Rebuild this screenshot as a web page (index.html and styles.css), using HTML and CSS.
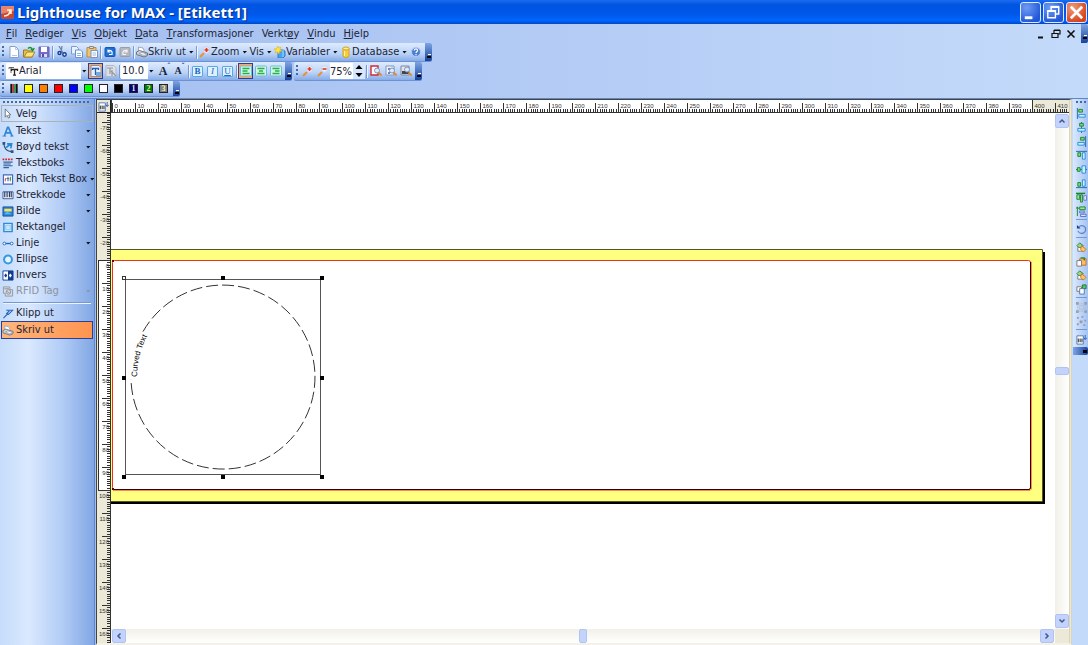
FILE: index.html
```
<!DOCTYPE html>
<html lang="no">
<head>
<meta charset="utf-8">
<title>Lighthouse for MAX - [Etikett1]</title>
<link rel="stylesheet" href="styles.css">
</head>
<body>
<svg class="defs" aria-hidden="true">
  <symbol id="new" viewBox="0 0 12 12"><path d="M2 .5h5.500l3 3v8H2z" fill="#fff" stroke="#8a9fc4"/><path d="M7.500.5v3h3M4 9.500h5" stroke="#a9cdf2" fill="none"/></symbol>
  <symbol id="open" viewBox="0 0 12 12"><path d="M.5 11V4h4l1 1h4v6z" fill="#e8c048" stroke="#9a7b20"/><path d="M1 11l3-5h8l-3 5z" fill="#ffe27a" stroke="#a88828"/><path d="M5 2.500c2-2 4-1 4.500 1.500M7.800 3l2 1.500L11.300 2" fill="none" stroke="#18952c" stroke-width="1.400"/></symbol>
  <symbol id="save" viewBox="0 0 12 12"><path d="M1 1h10v10H1z" fill="#746cc8" stroke="#6a63bc"/><path d="M3 1h6v5H3z" fill="#fff"/><path d="M3 8h6v3H3z" fill="#d8dcf4"/><path d="M4 8h2v3H4z" fill="#514aa6"/></symbol>
  <symbol id="cut" viewBox="0 0 12 12"><path d="M3 0l4 7M6 0L5 7" stroke="#6880a8" stroke-width="1.200"/><circle cx="3.500" cy="7" r="1.500" fill="#d8e8ff" stroke="#173f90" stroke-width="1.400"/><circle cx="8.500" cy="8.500" r="1.700" fill="#d8e8ff" stroke="#173f90" stroke-width="1.400"/></symbol>
  <symbol id="copy" viewBox="0 0 12 12"><path d="M.5.5h5l2 2V8h-7z" fill="#e9f2ff" stroke="#7c9ccf"/><path d="M4.500 4h5l2 2v5.500h-7z" fill="#fff" stroke="#6c90c8"/><path d="M6 7.500h4M6 9.500h4" stroke="#8ab4ee"/></symbol>
  <symbol id="paste" viewBox="0 0 12 12"><path d="M1 1.500h9V11H1z" fill="#f0c468" stroke="#b98e40"/><path d="M3.500.5h4v2h-4z" fill="#ddd" stroke="#888"/><path d="M5 4.500h6.500v7H5z" fill="#fff" stroke="#7c94c0"/><path d="M6.500 7h3.500M6.500 9h3.500" stroke="#9bb8e0"/></symbol>
  <symbol id="undo" viewBox="0 0 12 12"><rect x="1" y="1.500" width="10" height="9" rx="1" fill="#1d6fd4" stroke="#1458b8"/><path d="M4 3.500v2.500h2.500M4 5.500C6 3 9 5 8 8.500H5" fill="none" stroke="#fff" stroke-width="1.200"/></symbol>
  <symbol id="redo" viewBox="0 0 12 12"><rect x="1" y="1.500" width="10" height="9" rx="1" fill="#b4b8c0" stroke="#989da6"/><path d="M8 3.500v2.500H5.500M8 5.500C6 3 3 5 4 8.500H7" fill="none" stroke="#f4f4f4" stroke-width="1.200"/></symbol>
  <symbol id="print" viewBox="0 0 12 12"><path d="M2.500 5V1l4.500 1 1.500 3.500" fill="#fff" stroke="#a0abc0"/><path d="M.5 6l3-1.500 8 2.500v2.500L8 11 .5 8.500z" fill="#cfd2da" stroke="#6d7482"/><path d="M3 7.500l5 2 3-1.500-5-1.500z" fill="#fff" stroke="#8a909c" stroke-width=".7"/></symbol>
  <symbol id="zin" viewBox="0 0 12 12"><path d="M1 11l4-4" stroke="#ec9038" stroke-width="2.200"/><circle cx="7.500" cy="4" r="3.300" fill="#e6efff" stroke="#c4d2ee"/><path d="M5.500 4h4M7.500 2v4" stroke="#e0381c" stroke-width="1.600"/></symbol>
  <symbol id="zout" viewBox="0 0 12 12"><path d="M1 11l4-4" stroke="#ec9038" stroke-width="2.200"/><circle cx="7.500" cy="4" r="3.300" fill="#e6efff" stroke="#c4d2ee"/><path d="M5.500 4h4" stroke="#e0381c" stroke-width="1.600"/></symbol>
  <symbol id="var" viewBox="0 0 12 12"><path d="M4 4h5l2 1v5l-2 2H4z" fill="#49a2ee" stroke="#2c7cd0"/><path d="M9 4v7" stroke="#a5dcff"/><path d="M4 0l1 2 2-1-1 2.500L8 5 5.500 5.300 5 8 3.500 6 1 7l1-2.500L0 3l2.700-.5z" fill="#ffe23c" stroke="#e4b024" stroke-width=".6"/></symbol>
  <symbol id="db" viewBox="0 0 12 12"><path d="M3 2v8c1 2 5 2 6 0V2z" fill="#f8cd38" stroke="#d4a420"/><ellipse cx="6" cy="2.500" rx="3" ry="1.500" fill="#ffee91" stroke="#d4a420"/><path d="M4.500 5v5" stroke="#fff5b8"/></symbol>
  <symbol id="help" viewBox="0 0 12 12"><circle cx="6" cy="6" r="4.500" fill="#4c7fd4" stroke="#b4ccf4"/><path d="M4.300 4.500c0-2.400 3.800-2 3.200.2C7.200 5.800 6 5.700 6 7M6 8v1.300" fill="none" stroke="#fff" stroke-width="1.200"/></symbol>
  <symbol id="tt" viewBox="0 0 12 12"><path d="M2 4V2.500h5M4 2.500V8" fill="none" stroke="#666"/><path d="M4.500 6V4.500h6V6M7.500 4.500V10M6 10.200h3" fill="none" stroke="#222" stroke-width="1.300"/></symbol>
  <symbol id="ttb" viewBox="0 0 12 12"><path d="M1 .5h8l2 2v9H1z" fill="#e8f1ff" stroke="#7a92c0"/><path d="M2.500 5V3.500h6V5M5.500 4v6" fill="none" stroke="#2860b0" stroke-width="1.300"/><path d="M6 7h5v4H6z" fill="#74aade"/></symbol>
  <symbol id="ttg" viewBox="0 0 12 12"><path d="M1 .5h8l2 2v9H1z" fill="#dcdfe6" stroke="#b4b8c0"/><path d="M2 3h6M5 3v6M6 6l5 5M7 5v6" fill="none" stroke="#9699a2" stroke-width="1.200"/></symbol>
  <symbol id="al" viewBox="0 0 12 12"><rect x=".5" y="1" width="11" height="10" rx="1" fill="#d0f4e4" stroke="#68c0dc"/><path d="M2.500 3.500h7M2.500 6h5M2.500 8.500h7" stroke="#28b048" stroke-width="1.700"/></symbol>
  <symbol id="ac" viewBox="0 0 12 12"><rect x=".5" y="1" width="11" height="10" rx="1" fill="#d0f4e4" stroke="#68c0dc"/><path d="M2.500 3.500h7M4 6h4M2.500 8.500h7" stroke="#28b048" stroke-width="1.700"/></symbol>
  <symbol id="ar" viewBox="0 0 12 12"><rect x=".5" y="1" width="11" height="10" rx="1" fill="#d0f4e4" stroke="#68c0dc"/><path d="M2.500 3.500h7M5 6h4.500M2.500 8.500h7" stroke="#28b048" stroke-width="1.700"/></symbol>
  <symbol id="pgr" viewBox="0 0 12 12"><path d="M1 1h7v9H1z" fill="#fff" stroke="#d02838" stroke-width="1.400"/><circle cx="7" cy="5.500" r="2.500" fill="#dceaff" stroke="#8094b8"/><path d="M8.500 7.500l3 3" stroke="#e08a30" stroke-width="2"/></symbol>
  <symbol id="pgb" viewBox="0 0 12 12"><path d="M1 1h8v9H1z" fill="#eef3ff" stroke="#7c96c0"/><path d="M3 3h2v2H3zM3 7h2v2H3z" fill="#6a84b4"/><circle cx="7" cy="5.500" r="2.500" fill="#dceaff" stroke="#8094b8"/><path d="M8.500 7.500l3 3" stroke="#e08a30" stroke-width="2"/></symbol>
  <symbol id="pgk" viewBox="0 0 12 12"><path d="M1 1h8v9H1z" fill="#dfe4ef" stroke="#7c88a0"/><path d="M2 6h7v3H2z" fill="#444"/><circle cx="7" cy="4.500" r="2.500" fill="#dceaff" stroke="#8094b8"/><path d="M8.500 7.500l3 3" stroke="#e08a30" stroke-width="2"/></symbol>
  <symbol id="pens" viewBox="0 0 12 12"><path d="M3 1v10" stroke="#111" stroke-width="2"/><path d="M5 1v10" stroke="#c01818" stroke-width="1.600"/><path d="M7 1v10" stroke="#168c28" stroke-width="1.600"/><path d="M9 1v10" stroke="#111" stroke-width="2"/></symbol>
  <symbol id="ptr" viewBox="0 0 12 12"><path d="M3 1v9l2-2 1.500 3 1.500-.8L6.700 7.500H9z" fill="#fff" stroke="#555" stroke-width=".8"/></symbol>
  <symbol id="txt" viewBox="0 0 12 12"><path d="M2 11L5.500 1.500h1L10.500 11M3 7.500h6" fill="none" stroke="#2f86d8" stroke-width="1.800"/><path d="M0 11h4M8.500 11H12" stroke="#2f86d8"/></symbol>
  <symbol id="crv" viewBox="0 0 12 12"><path d="M1.500 1c0 5 3 9 9 9.500" fill="none" stroke="#34527c" stroke-width="1.200"/><path d="M0 0h3v3H0zM9 9h3v3H9z" fill="#34527c"/><path d="M4 6l5-4M5 2l5 0-1 5" fill="none" stroke="#268ad8" stroke-width="1.800"/></symbol>
  <symbol id="tbx" viewBox="0 0 12 12"><path d="M0 1.500h12" stroke="#d62a32" stroke-width="2" stroke-dasharray="2 1"/><path d="M1 4.500h10M1 6.500h8M1 8.500h10M1 10.500h6" stroke="#36619c" stroke-width="1.200"/></symbol>
  <symbol id="rtf" viewBox="0 0 12 12"><path d="M1 1h10v10H1z" fill="#fff" stroke="#4266bc" stroke-width="1.200"/><path d="M3 8V5l1.500 0" stroke="#d32f32" fill="none"/><path d="M6 3v5M5 5h2" stroke="#2056b8"/><path d="M9.500 3.500H8.500V8M8 5.500h1.500" fill="none" stroke="#258b3c"/></symbol>
  <symbol id="bar" viewBox="0 0 12 12"><path d="M.5 2h11v7.500H.5z" fill="#f6f9ff" stroke="#3c5488"/><path d="M2.500 2v6M5 2v6M7.500 2v6M9.500 2v6" stroke="#182c5c" stroke-width="1.200"/></symbol>
  <symbol id="img" viewBox="0 0 12 12"><path d="M.5 1h11v10H.5z" fill="#2c83d8" stroke="#194f9e"/><path d="M2 3h8v3H2z" fill="#ffe252"/><path d="M2 9l3-3 5 3z" fill="#49c0f4"/></symbol>
  <symbol id="rct" viewBox="0 0 12 12"><path d="M1.500 1.500h9v9h-9z" fill="#d5f0ff" stroke="#2f8ad8" stroke-width="1.600"/><path d="M3.500 3.500h5v5h-5z" fill="#c8e6fb" stroke="#8cc4ec"/></symbol>
  <symbol id="lin" viewBox="0 0 12 12"><path d="M3 6h6" stroke="#1969bb" stroke-width="1.500"/><circle cx="2" cy="6" r="1.500" fill="#fff" stroke="#1969bb"/><circle cx="10" cy="6" r="1.500" fill="#fff" stroke="#1969bb"/></symbol>
  <symbol id="ell" viewBox="0 0 12 12"><circle cx="6" cy="6" r="4.300" fill="#e3f5ff" stroke="#3c98dc" stroke-width="2.200"/></symbol>
  <symbol id="inv" viewBox="0 0 12 12"><path d="M.5 1h11v10H.5z" fill="#fff" stroke="#133c90"/><path d="M6 1h5.500v10H6z" fill="#133c90"/><path d="M2 6h3M3.500 4v4" stroke="#133c90" stroke-width="1.400"/><path d="M7 6h3M8.500 4v4" stroke="#fff" stroke-width="1.400"/></symbol>
  <symbol id="rfid" viewBox="0 0 12 12"><path d="M1 1h7v3h3v7H3V8H1z" fill="#d7dbe3" stroke="#9096a2"/><circle cx="6.500" cy="6.500" r="2.500" fill="none" stroke="#8c929c"/><path d="M2 3h5M5 6l3 2" stroke="#8c929c"/></symbol>
  <symbol id="clip" viewBox="0 0 12 12"><path d="M1 11L6 6M4 2.500h7L6.500 7l-2-1 3-3" fill="#c4e4ff" stroke="#2568c0" stroke-width="1.200"/></symbol>
  <symbol id="mb" viewBox="0 0 12 12"><path d="M1 2h7v9H1z" fill="#fff" stroke="#5175b4"/><path d="M2.500 5v4M4.500 5v4M6.500 5v4" stroke="#111"/><path d="M10 1v5M8.500 4l1.500 2 2-2" fill="none" stroke="#2a5fb6"/></symbol>
  <symbol id="a1" viewBox="0 0 12 12"><path d="M1.500 0v12" stroke="#245fae"/><path d="M3 1.500h4v3H3z" fill="#7bdc72" stroke="#168430"/><path d="M3 7h7v3H3z" fill="#c8f0ff" stroke="#258bd6"/></symbol>
  <symbol id="a2" viewBox="0 0 12 12"><path d="M6 0v12" stroke="#245fae"/><path d="M4 1.500h4v3H4z" fill="#7bdc72" stroke="#168430"/><path d="M2 7h8v3H2z" fill="#c8f0ff" stroke="#258bd6"/></symbol>
  <symbol id="a3" viewBox="0 0 12 12"><path d="M10.500 0v12" stroke="#245fae"/><path d="M5 1.500h4v3H5z" fill="#7bdc72" stroke="#168430"/><path d="M2 7h7v3H2z" fill="#c8f0ff" stroke="#258bd6"/></symbol>
  <symbol id="a4" viewBox="0 0 12 12"><path d="M0 1.500h12" stroke="#245fae"/><path d="M2 3h3v4H2z" fill="#7bdc72" stroke="#168430"/><path d="M7 3h3v7H7z" fill="#c8f0ff" stroke="#258bd6"/></symbol>
  <symbol id="a5" viewBox="0 0 12 12"><path d="M0 6h12" stroke="#245fae"/><path d="M1.500 4h3v4h-3z" fill="#7bdc72" stroke="#168430"/><path d="M6.500 2h4v8h-4z" fill="#c8f0ff" stroke="#258bd6"/></symbol>
  <symbol id="a6" viewBox="0 0 12 12"><path d="M0 10.500h12" stroke="#245fae"/><path d="M2 5h3v4H2z" fill="#7bdc72" stroke="#168430"/><path d="M7 2h3v7H7z" fill="#c8f0ff" stroke="#258bd6"/></symbol>
  <symbol id="a7" viewBox="0 0 12 12"><path d="M0 1.500h10" stroke="#168430" stroke-width="1.500"/><path d="M1 3h3v5H1zM5 3h2v8H5z" fill="#9de493" stroke="#168430"/><path d="M8.500 4h3v5h-3z" fill="#dfe4ff" stroke="#6878c4"/></symbol>
  <symbol id="a8" viewBox="0 0 12 12"><path d="M1.500 1v10M0 3l1.500-2L3 3" fill="none" stroke="#168430"/><path d="M4 1h6v3H4z" fill="#9de493" stroke="#168430"/><path d="M4 5.500h5v2H4zM5 9h6v2.500H5z" fill="#dfe4ff" stroke="#5270c0"/></symbol>
  <symbol id="rot" viewBox="0 0 12 12"><path d="M3 3.500c3-3.500 8-1 7.500 3S4 12 2 7.500" fill="none" stroke="#5a7fc2" stroke-width="1.200"/><path d="M1 1v4h4z" fill="#183f9c"/></symbol>
  <symbol id="o1" viewBox="0 0 12 12"><path d="M4 1l4 3-4 3-3-3z" fill="#9bd77d" stroke="#2a813a"/><path d="M2 6h6v4H2z" fill="#fff" stroke="#777"/><path d="M6 4l5 4-3 3-3-3z" fill="#ffc46a" stroke="#c3761f"/></symbol>
  <symbol id="o2" viewBox="0 0 12 12"><path d="M4 3h7v7H4z" fill="#ffbb6a" stroke="#c36a1a"/><path d="M1 5h5v6H1z" fill="#fff" stroke="#777"/><path d="M5 2h4v3" fill="none" stroke="#218e35" stroke-width="1.500"/></symbol>
  <symbol id="o3" viewBox="0 0 12 12"><path d="M1 3h5v5H1z" fill="#fff" stroke="#777"/><path d="M7 1h4v4H7z" fill="#5ac46b" stroke="#187a2c"/><path d="M4 5h5v6H4z" fill="#fff" stroke="#5874a8"/></symbol>
  <symbol id="grp" viewBox="0 0 12 12"><path d="M2 2h8v8H2zM4 4h4v4H4z" fill="none" stroke="#adb7c8" stroke-dasharray="2 1"/><path d="M0 0h3v3H0zM9 0h3v3H9zM0 9h3v3H0zM9 9h3v3H9z" fill="#98a2b4"/></symbol>
  <symbol id="ugr" viewBox="0 0 12 12"><path d="M1 1h2v2H1zM6 0h2v2H6zM9 4h2v2H9zM4 5h3v3H4zM1 8h2v2H1zM8 9h2v2H8z" fill="#929cae"/></symbol>
</svg>

<header class="title">
  <svg class="logo" viewBox="0 0 13 13"><rect width="13" height="13" rx="1" fill="#c84830"/><path d="M0 0h13v5L0 8z" fill="#e88268"/><path d="M3 10c5 0 6-3 6-6M6 4h4v4" fill="none" stroke="#fff0d8" stroke-width="1.600"/></svg>
  <h1>Lighthouse for MAX - [Etikett1]</h1>
  <button class="win" aria-label="Minimer"><svg viewBox="0 0 20 20"><path d="M4 14h8v3H4z" fill="#fff"/></svg></button>
  <button class="win" aria-label="Gjenopprett"><svg viewBox="0 0 20 20"><path d="M7.500 8V4.500h8v7H12" fill="none" stroke="#fff" stroke-width="1.500"/><path d="M7 4h9" stroke="#fff" stroke-width="2"/><path d="M4 8.500h8v7H4z" fill="none" stroke="#fff" stroke-width="1.500"/><path d="M3.500 8.500h9" stroke="#fff" stroke-width="2"/></svg></button>
  <button class="win close" aria-label="Lukk"><svg viewBox="0 0 20 20"><path d="M4 4l12 12M16 4L4 16" stroke="#fff" stroke-width="2.800"/></svg></button>
</header>

<nav class="menu">
  <button><u>F</u>il</button><button><u>R</u>ediger</button><button><u>V</u>is</button><button><u>O</u>bjekt</button><button><u>D</u>ata</button><button><u>T</u>ransformasjoner</button><button>Verkt<u>ø</u>y</button><button><u>V</u>indu</button><button><u>H</u>jelp</button>
  <span class="push"></span>
  <button class="mdi" aria-label="Minimer dokument"><svg viewBox="0 0 10 10"><path d="M2 8.500h5" stroke="#111" stroke-width="2"/></svg></button>
  <button class="mdi" aria-label="Gjenopprett dokument"><svg viewBox="0 0 10 10"><path d="M3 4V1.500h6V5H7M1 4.500h6v4H1zM3 1h6M1 4.500h6" fill="none" stroke="#111" stroke-width="1.200"/></svg></button>
  <button class="mdi" aria-label="Lukk dokument"><svg viewBox="0 0 10 10"><path d="M1.500 1.500l7 7M8.500 1.500l-7 7" stroke="#111" stroke-width="1.600"/></svg></button>
  <span class="cap"></span>
</nav>

<div class="bars">
  <div class="row">
    <div class="bar">
      <i class="grip"></i>
      <button class="ib" aria-label="Ny"><svg><use href="#new"/></svg></button><button class="ib" aria-label="Åpne"><svg><use href="#open"/></svg></button><button class="ib" aria-label="Lagre"><svg><use href="#save"/></svg></button><i class="sep"></i>
      <button class="ib" aria-label="Klipp"><svg><use href="#cut"/></svg></button><button class="ib" aria-label="Kopier"><svg><use href="#copy"/></svg></button><button class="ib" aria-label="Lim inn"><svg><use href="#paste"/></svg></button><i class="sep"></i>
      <button class="ib" aria-label="Angre"><svg><use href="#undo"/></svg></button><button class="ib" aria-label="Gjenta"><svg><use href="#redo"/></svg></button><i class="sep"></i>
      <button class="tb"><svg><use href="#print"/></svg>Skriv ut<b class="dd"></b></button><i class="sep"></i>
      <button class="tb"><svg><use href="#zin"/></svg>Zoom<b class="dd"></b></button>
      <button class="tb">Vis<b class="dd"></b></button>
      <button class="tb"><svg><use href="#var"/></svg>Variabler<b class="dd"></b></button>
      <button class="tb"><svg><use href="#db"/></svg>Database<b class="dd"></b></button>
      <button class="ib" aria-label="Hjelp"><svg><use href="#help"/></svg></button>
      <span class="cap"></span>
    </div>
  </div>
  <div class="row">
    <div class="bar">
      <i class="grip"></i>
      <label class="combo font"><svg><use href="#tt"/></svg><select aria-label="Skrift"><option>Arial</option></select></label><b class="dd"></b>
      <button class="ib on" aria-label="Skrifttype"><svg><use href="#ttb"/></svg></button><button class="ib" aria-label="Skrivefont"><svg><use href="#ttg"/></svg></button><i class="sep"></i>
      <label class="combo size"><select aria-label="Størrelse"><option>10.0</option></select></label><b class="dd"></b>
      <button class="ib serif">A<sup>ˆ</sup></button><button class="ib serif small">A<sup>ˇ</sup></button><i class="sep"></i>
      <button class="ib fmt"><b>B</b></button><button class="ib fmt"><em>I</em></button><button class="ib fmt"><u>U</u></button><i class="sep"></i>
      <button class="ib on" aria-label="Venstrejuster"><svg><use href="#al"/></svg></button><button class="ib" aria-label="Midtstill"><svg><use href="#ac"/></svg></button><button class="ib" aria-label="Høyrejuster"><svg><use href="#ar"/></svg></button>
      <span class="cap"></span>
    </div>
    <div class="bar">
      <i class="grip"></i>
      <button class="ib" aria-label="Zoom inn"><svg><use href="#zin"/></svg></button><button class="ib" aria-label="Zoom ut"><svg><use href="#zout"/></svg></button>
      <input class="pct" aria-label="Zoom" value="75%">
      <button class="spin" aria-label="Endre zoom"><svg viewBox="0 0 12 16"><path d="M6 2l3.500 4h-7zM6 14l3.500-4h-7z"/></svg></button><i class="sep"></i>
      <button class="ib" aria-label="Hele etiketten"><svg><use href="#pgr"/></svg></button><button class="ib" aria-label="Alle objekter"><svg><use href="#pgb"/></svg></button><button class="ib" aria-label="Valgte objekter"><svg><use href="#pgk"/></svg></button>
      <span class="cap"></span>
    </div>
  </div>
  <div class="row short">
    <div class="bar">
      <i class="grip"></i>
      <button class="ib" aria-label="Farger"><svg class="pens"><use href="#pens"/></svg></button>
      <button class="ib" aria-label="Gul"><i class="sw yellow"></i></button><button class="ib" aria-label="Oransje"><i class="sw orange"></i></button><button class="ib" aria-label="Rød"><i class="sw red"></i></button><button class="ib" aria-label="Blå"><i class="sw blue"></i></button><button class="ib" aria-label="Grønn"><i class="sw green"></i></button><button class="ib" aria-label="Hvit"><i class="sw white"></i></button><button class="ib" aria-label="Svart"><i class="sw black"></i></button><button class="ib"><i class="sw navy">1</i></button><button class="ib"><i class="sw dgreen">2</i></button><button class="ib"><i class="sw gray">3</i></button>
      <span class="cap"></span>
    </div>
  </div>
</div>

<main class="main">
  <aside class="tools">
    <i class="hgrip"></i>
    <button class="tool hover"><svg><use href="#ptr"/></svg><span>Velg</span></button>
    <button class="tool"><svg><use href="#txt"/></svg><span>Tekst</span><b class="dd"></b></button>
    <button class="tool"><svg><use href="#crv"/></svg><span>Bøyd tekst</span><b class="dd"></b></button>
    <button class="tool"><svg><use href="#tbx"/></svg><span>Tekstboks</span><b class="dd"></b></button>
    <button class="tool"><svg><use href="#rtf"/></svg><span>Rich Tekst Box</span><b class="dd"></b></button>
    <button class="tool"><svg><use href="#bar"/></svg><span>Strekkode</span><b class="dd"></b></button>
    <button class="tool"><svg><use href="#img"/></svg><span>Bilde</span><b class="dd"></b></button>
    <button class="tool"><svg><use href="#rct"/></svg><span>Rektangel</span></button>
    <button class="tool"><svg><use href="#lin"/></svg><span>Linje</span><b class="dd"></b></button>
    <button class="tool"><svg><use href="#ell"/></svg><span>Ellipse</span></button>
    <button class="tool"><svg><use href="#inv"/></svg><span>Invers</span></button>
    <button class="tool" disabled><svg><use href="#rfid"/></svg><span>RFID Tag</span><b class="dd"></b></button>
    <hr>
    <button class="tool"><svg><use href="#clip"/></svg><span>Klipp ut</span></button>
    <button class="tool active"><svg><use href="#print"/></svg><span>Skriv ut</span></button>
  </aside>

  <section class="work">
    <button class="corner" aria-label="Måleenhet"><svg><use href="#mb"/></svg></button>
    <svg class="ruler" id="rulerTop"></svg>
    <svg class="ruler" id="rulerLeft"></svg>
    <svg class="canvas">
      <path d="M0 139H934V391H0z" fill="#000"/>
      <path d="M0 136H931V388H0z" fill="#ffff80"/>
      <path d="M0 136.500H931.500V388.500H0" fill="none" stroke="#55552a"/>
      <rect x="1.500" y="147.500" width="918" height="229" rx="2" fill="#fff" stroke="#f03018"/>
      <path d="M2 376.500H918.500L919.500 375V149" fill="none" stroke="#300"/>
      <path d="M2 377.500H919L920.500 376V149" fill="none" stroke="#ff8a50"/>
      <path d="M1 147h2v2H1zM1 375h2v2H1z" fill="#600"/>
      <rect x="14.500" y="166.500" width="195" height="195" fill="none" stroke="#555"/>
      <path class="dash" d="M32 218.600A92 92 0 1 1 20 266"/>
      <path id="arc" d="M26 264A86 86 0 0 1 112 178" fill="none"/>
      <text class="curved"><textPath href="#arc">Curved Text</textPath></text>
      <path d="M110 163h4v4h-4zM209 163h4v4h-4zM11 263h4v4h-4zM209 263h4v4h-4zM11 362h4v4h-4zM110 362h4v4h-4zM209 362h4v4h-4z"/>
      <rect x="11.500" y="163.500" width="3" height="3" fill="#fff" stroke="#333"/>
    </svg>
    <div class="scroll v">
      <button aria-label="Opp"><svg viewBox="0 0 12 12"><path d="M3.500 7.500L6 5l2.500 2.500"/></svg></button>
      <span class="push"></span><span class="thumb"></span><span class="push"></span>
      <button aria-label="Ned"><svg viewBox="0 0 12 12"><path d="M3.500 4.500L6 7l2.500-2.500"/></svg></button>
    </div>
    <div class="scroll h">
      <button aria-label="Venstre"><svg viewBox="0 0 12 12"><path d="M7.500 3.500L5 6l2.500 2.500"/></svg></button>
      <span class="push"></span><span class="thumb"></span><span class="push"></span>
      <button aria-label="Høyre"><svg viewBox="0 0 12 12"><path d="M4.500 3.500L7 6 4.500 8.500"/></svg></button>
    </div>
  </section>

  <aside class="side">
    <div class="sidebar">
      <i class="hgrip"></i>
      <button aria-label="Venstre kant"><svg><use href="#a1"/></svg></button><button aria-label="Midt loddrett"><svg><use href="#a2"/></svg></button><button aria-label="Høyre kant"><svg><use href="#a3"/></svg></button><button aria-label="Topp"><svg><use href="#a4"/></svg></button><button aria-label="Midt vannrett"><svg><use href="#a5"/></svg></button><button aria-label="Bunn"><svg><use href="#a6"/></svg></button><button aria-label="Fordel vannrett"><svg><use href="#a7"/></svg></button><button aria-label="Fordel loddrett"><svg><use href="#a8"/></svg></button>
      <hr><button aria-label="Roter"><svg><use href="#rot"/></svg></button><hr>
      <button aria-label="Fremst"><svg><use href="#o1"/></svg></button><button aria-label="Fremover"><svg><use href="#o2"/></svg></button><button aria-label="Bakover"><svg><use href="#o1"/></svg></button><button aria-label="Bakerst"><svg><use href="#o3"/></svg></button>
      <hr><button aria-label="Grupper"><svg><use href="#grp"/></svg></button><button aria-label="Del opp"><svg><use href="#ugr"/></svg></button><hr>
      <button aria-label="Egenskaper"><svg><use href="#mb"/></svg></button>
      <span class="cap"></span>
    </div>
  </aside>
</main>
<script src="rulers.js"></script>
</body>
</html>
```
FILE: styles.css
```
* { box-sizing: border-box; }
html, body { height: 100%; margin: 0; }
body {
  display: flex; flex-direction: column; overflow: hidden;
  font: 11px/14px "DejaVu Sans Condensed", "DejaVu Sans", sans-serif; color: #1c2436;
  background: linear-gradient(90deg, #a2bdf0, #c4dafa);
}
button, input, select { font: inherit; color: inherit; margin: 0; padding: 0; border: 0; background: none; border-radius: 0; }
button { display: flex; align-items: center; white-space: nowrap; }
svg { display: block; flex: none; }
.defs { position: absolute; width: 0; height: 0; }
.push { flex: 1; }

.title {
  display: flex; align-items: center; gap: 2px; height: 24px; flex: none; padding: 0 1px 0 1px;
  background: linear-gradient(#1c6cf0, #0054e0 20%, #0058ea 60%, #0066ff 85%, #0047c4);
}
.logo { width: 13px; height: 13px; }
.title h1 {
  flex: 1; margin: 0 0 0 1px; font: bold 15px/22px "Noto Sans", sans-serif; color: #fff;
  text-shadow: 1px 1px 1px #0a2a80; white-space: nowrap;
}
.win {
  width: 21px; height: 21px; border: 1px solid #dfe9ff; border-radius: 3px;
  background: radial-gradient(circle at 30% 25%, #6f9cf5, #2258d8 75%);
}
.win.close { background: radial-gradient(circle at 30% 25%, #f09a78, #d8451c 75%); }
.win svg { width: 19px; height: 19px; }

.menu { display: flex; align-items: center; gap: 8px; height: 19px; flex: none; padding-left: 6px; }
.menu u { text-underline-offset: 1px; }
.mdi { width: 10px; margin-right: -3px; }
.mdi svg { width: 10px; height: 10px; }
.menu .cap { margin-left: 0; }

.bars { flex: none; display: flex; flex-direction: column; padding-bottom: 1px; }
.row { display: flex; height: 19px; gap: 2px; }
.row.short { height: 16px; }
.bar {
  display: flex; align-items: center; padding-left: 2px;
  background: linear-gradient(#deebfe, #b9d2f7 60%, #86abe6);
  border-bottom: 1px solid #6b92d4; border-radius: 2px;
}
.grip { width: 3px; height: 12px; margin-right: 1px; background: repeating-linear-gradient(#4468a8 0 2px, transparent 2px 4px) left / 2px 100% no-repeat; }
.sep { width: 1px; height: 13px; margin: 0 1px; background: #7599d4; box-shadow: 1px 0 #edf4ff; }
.ib { width: 15px; height: 16px; justify-content: center; }
.ib svg, .tb svg, .combo svg { width: 12px; height: 12px; }
.ib .pens { height: 11px; }
.ib.on { border: 1px solid #2c3f98; background: #f9a764; }
.tb { padding-left: 1px; }
.dd { width: 7px; height: 3px; flex: none; background: #111; clip-path: polygon(1px 0, 6px 0, 3px 3px); }
.tb .dd { margin-left: 2px; }
.cap {
  align-self: stretch; width: 7px; margin-left: 2px; border-radius: 0 2px 2px 0;
  background: linear-gradient(#fff, #fff) 3px 11px / 3px 1px no-repeat, linear-gradient(#000, #000) 2px 13px / 4px 2px no-repeat, linear-gradient(#7da4e4, #17439c);
}
.row.short .cap { background-position: 3px 9px, 2px 11px, 0 0; }
.combo { display: flex; align-items: center; background: #fff; height: 16px; }
.combo select { appearance: none; flex: 1; min-width: 0; outline: 0; }
.combo.font { width: 75px; padding-left: 1px; }
.combo.size { width: 27px; padding-left: 1px; }
.size + .dd { margin-right: 2px; }
.serif { font: bold 12px/14px "Liberation Serif", serif; }
.serif.small { font-size: 10px; }
.serif sup { font-size: 8px; line-height: 8px; align-self: flex-start; color: #234fa8; }
.fmt { font: 9px/10px "Liberation Serif", serif; color: #1668c8; padding: 2px; }
.fmt > * { width: 11px; height: 11px; border: 1px solid #5ba6e4; border-radius: 1px; background: #dff1ff; text-align: center; line-height: 9px; }
.pct { width: 23px; height: 16px; background: #fff; }
.spin { width: 12px; height: 16px; background: #d7e6fc; }
.spin svg { width: 12px; height: 16px; }
.sw { width: 9px; height: 9px; border: 1px solid #223; font: bold 8px/8px "Liberation Serif", serif; color: #f4f0b0; text-align: center; }
.yellow { background: #ff0; } .orange { background: #ff8000; } .red { background: #f00; } .blue { background: #00f; }
.green { background: #0f0; } .white { background: #fff; } .black { background: #000; } .navy { background: #000080; }
.dgreen { background: #008000; } .gray { background: #808080; }

.main { flex: 1; min-height: 0; display: grid; grid-template-columns: 95px 1fr 15px; column-gap: 1px; border-top: 1px solid #5f86c8; }
.tools {
  display: flex; flex-direction: column; padding: 2px 1px 0 1px; border-right: 1px solid #5f86c8;
  background: linear-gradient(90deg, #c5dcfb, #dae9fe 30%, #b3cdf6 65%, #81a7e4);
}
.hgrip { height: 2px; margin: 0 2px; flex: none; background: repeating-linear-gradient(90deg, #4468a8 0 2px, transparent 2px 4px); }
.tool { height: 16px; flex: none; gap: 2px; border: 1px solid transparent; }
.tool svg { width: 12px; height: 11px; }
.tool span { flex: 1; text-align: left; }
.tool.hover { height: 17px; margin: 2px 0 1px; border-color: #a9b2b9; }
.tool:disabled { color: #8d949f; }
.tool:disabled .dd { background: #8d949f; }
.tool.active { height: 18px; border-color: #2c3f98; background: linear-gradient(90deg, #ffb67c, #ff9450); }
.tools hr { width: 88px; height: 1px; border: 0; margin: 3px 2px 2px; background: #7599d4; box-shadow: 0 1px #edf4ff; }

.work {
  min-width: 0; display: grid; grid-template: 13px 1fr 14px / 14px 1fr 14px;
  background: #ece9d8; border: 1px solid #45443c; border-right: 3px double #d8d4c0; border-bottom: 2px solid #f4f2e8;
}
.corner { justify-content: center; border-right: 1px solid #222; border-bottom: 1px solid #222; }
.corner svg { width: 11px; height: 11px; }
.ruler { width: 100%; height: 100%; min-height: 0; overflow: hidden; }
#rulerTop { grid-column: span 2; }
#rulerLeft { grid-row: span 2; }
.ruler text { font: 6px "Liberation Sans", sans-serif; fill: #333; }
.ruler .minor, .ruler .major { stroke: #333; }
.canvas { width: 100%; height: 100%; min-height: 0; overflow: hidden; background: #fff; }
.dash { fill: none; stroke: #333; stroke-dasharray: 12 4; }
.curved { font: 8px "Liberation Sans", sans-serif; }
.scroll { display: flex; padding: 1px 0; background: linear-gradient(90deg, #f1f0e8, #fff); }
.scroll.v { flex-direction: column; }
.scroll.h { padding: 0 1px; background: linear-gradient(#f1f0e8, #fff); }
.scroll button, .thumb { background: #c3d3fc; border: 1px solid #b0c4f4; border-radius: 2px; }
.scroll button { width: 14px; height: 14px; flex: none; justify-content: center; }
.scroll button svg { width: 12px; height: 12px; fill: none; stroke: #40598c; stroke-width: 1.5px; }
.v .thumb { height: 8px; }
.h .thumb { width: 8px; }

.side { background: #c4dafa; }
.sidebar { display: flex; flex-direction: column; padding: 2px 0 0 1px; background: linear-gradient(90deg, #dae9fe, #a5c3f1); }
.sidebar button { height: 14px; flex: none; justify-content: center; }
.sidebar svg { width: 11px; height: 11px; }
.sidebar .hgrip { margin-bottom: 3px; }
.sidebar hr { width: 11px; height: 1px; border: 0; margin: 1px auto 2px; background: #7599d4; }
.sidebar .cap { width: auto; height: 8px; margin: 1px 0 0 -1px; background: linear-gradient(#000, #000) 10px 3px / 4px 3px no-repeat, linear-gradient(90deg, #7da4e4, #17439c); }
```
FILE: rulers.js
```
// Draws both rulers at 75 % zoom: 2.3 px per millimetre.
const UNIT = 2.3;
const make = (parent, tag, attrs, text) => {
  const el = document.createElementNS("http://www.w3.org/2000/svg", tag);
  for (const k in attrs) el.setAttribute(k, attrs[k]);
  if (text !== undefined) el.textContent = text;
  parent.append(el);
};

const acrossRuler = document.getElementById("rulerTop");
const width = acrossRuler.getBoundingClientRect().width;
make(acrossRuler, "rect", { x: 0, y: 0, width: 921, height: 12, fill: "#fff" });
let minor = "", major = "";
for (let i = 0; 1 + i * UNIT < width; i++) {
  const x = Math.round(1 + i * UNIT) + 0.5;
  if (i % 10) minor += `M${x} 9V12`;
  else {
    major += `M${x} 3V12`;
    if (x + 12 < width) make(acrossRuler, "text", { x: x + 2, y: 8 }, i);
  }
}
make(acrossRuler, "path", { d: minor, class: "minor" });
make(acrossRuler, "path", { d: major + `M0 12.5H${width}M0.500 0V13M921.500 0V12`, class: "major" });

const downRuler = document.getElementById("rulerLeft");
const height = downRuler.getBoundingClientRect().height;
make(downRuler, "rect", { x: 2, y: 147, width: 12, height: 230, fill: "#fff" });
minor = major = "";
for (let i = -64; 147 + i * UNIT < height; i++) {
  const y = Math.round(147 + i * UNIT) + 0.5;
  if (i % 10) minor += `M10 ${y}H13`;
  else {
    major += `M5 ${y}H13`;
    if (y + 7 < height) make(downRuler, "text", { x: 12, y: y + 7, "text-anchor": "end" }, i < 0 ? i - 10 : i);
  }
}
make(downRuler, "path", { d: minor, class: "minor" });
make(downRuler, "path", { d: major + `M13.500 0V${height}M1.500 147V377M1 147.500H13M1 377.500H13`, class: "major" });
```
